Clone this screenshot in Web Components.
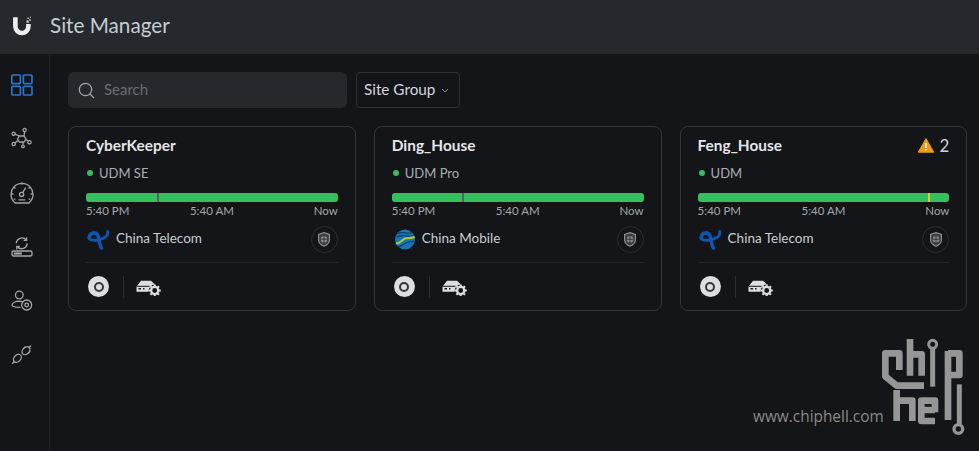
<!DOCTYPE html>
<html>
<head>
<meta charset="utf-8">
<style>
  html, body { margin: 0; height: 100%; background: #131518; overflow: hidden; }
  body { font-family: "Lato", "Liberation Sans", sans-serif; color: #dfe2e6; }
</style>
</head>
<body>
<site-manager>
  <site-card name="CyberKeeper" model="UDM SE" isp="China Telecom" logo="telecom" tick="#5c6065" tick-at="71"></site-card>
  <site-card name="Ding_House" model="UDM Pro" isp="China Mobile" logo="mobile" tick="#5c6065" tick-at="70"></site-card>
  <site-card name="Feng_House" model="UDM" isp="China Telecom" logo="telecom" alerts="2" tick="#e4c92f" tick-at="230"></site-card>
</site-manager>

<script>
// Top bar
class TopBar extends HTMLElement {
  constructor() {
    super();
    this.attachShadow({ mode: 'open' });
    this.shadowRoot.innerHTML = `
<style>
  :host { display: flex; align-items: center; height: 54px; background: #25282d; padding-left: 11px; box-sizing: border-box; flex: none; }
  svg { width: 22px; height: 22px; flex: none; margin-top: -3px; }
  span { margin-left: 17px; font-size: 20.7px; color: #c6ccd3; margin-top: -4px; }
</style>
<svg viewBox="0 0 22 22" fill="none">
  <path d="M4.4 2.2V11.5a6.5 6.5 0 0 0 13 0V9" stroke="#eceef0" stroke-width="4.6"/>
  <path d="M15.5 5.6h2.2v2.2h-2.2zM18.2 4.2h1.6v1.6h-1.6zM16.4 2.6h1.3v1.3h-1.3zM19 1.8h1v1h-1z" fill="#d8dade"/>
</svg>
<span>Site Manager</span>`;
  }
}
customElements.define('top-bar', TopBar);

// Left navigation
class SideNav extends HTMLElement {
  constructor() {
    super();
    this.attachShadow({ mode: 'open' });
    this.shadowRoot.innerHTML = `
<style>
  :host { display: flex; flex-direction: column; align-items: center; width: 50px; flex: none; box-sizing: border-box; border-right: 1px solid #1f2125; padding-top: 19px; gap: 30px; }
  svg { width: 24px; height: 24px; fill: none; stroke: #a3a6aa; stroke-width: 1.3; display: block; margin-left: -6px; }
</style>
<svg viewBox="0 0 24 24" style="stroke:#2f73c9;stroke-width:1.7">
  <rect x="1.8" y="2" width="8.6" height="8.6" rx="1"/><rect x="13.4" y="2" width="8.6" height="8.6" rx="1"/>
  <rect x="1.8" y="13.4" width="8.6" height="8.6" rx="1"/><rect x="13.4" y="13.4" width="8.6" height="8.6" rx="1"/>
</svg>
<svg viewBox="0 0 24 24">
  <path d="M9.5 9h4.5l2 3-2 3H9.5l-2-3z"/>
  <path d="M9.5 9 5 7.2M14 9l.6-4M16 12.5l2 1.6M13 15v2.6M7.8 13.5 5 16"/>
  <circle cx="3.7" cy="6.8" r="1.6"/><circle cx="14.6" cy="3" r="1.6"/><circle cx="19.4" cy="15.3" r="1.7"/><circle cx="13" cy="19.4" r="1.3"/><circle cx="3.7" cy="17" r="1.7"/>
</svg>
<svg viewBox="0 0 24 24">
  <path d="M5.2 22A11 11 0 1 1 18.8 22z"/>
  <path d="M12 1.5v2.2M3.8 6l1.6 1.4M20.2 6l-1.6 1.4M1.2 13h2.2M20.6 13h2.2M3.8 18.5l1.5-.8M20.2 18.5l-1.5-.8"/>
  <circle cx="11.6" cy="13.4" r="2.1"/><path d="M12.6 11.6 15.8 6.6M8.6 18.8h6.6"/>
</svg>
<svg viewBox="0 0 24 24">
  <rect x="2" y="16" width="20" height="5" rx="1.4"/><path d="M3.8 18.5h8" stroke-width="2.2"/>
  <path d="M6.3 8.200A5.600 5.600 0 0 1 16 4.800M17.200 8.400A5.600 5.600 0 0 1 7.400 11.800"/>
  <path d="M16.600 2.400V5.400H13.600M6.800 14.400V11.400H9.800"/>
</svg>
<svg viewBox="0 0 24 24">
  <circle cx="9.3" cy="6" r="3.8"/>
  <path d="M12.4 12.600a13 13 0 0 0-3.200-.5C5.800 12.100 2 13.800 2 16c0 1.800 2.600 2.400 8.400 2.400"/>
  <circle cx="16.700" cy="16" r="5"/><circle cx="16.700" cy="16" r="1.800"/>
</svg>
<svg viewBox="0 0 24 24">
  <path d="M2.200 20.800 4.600 18.200M21 2.800 18.800 5M15.400 3.600 13.400 5.600M20.200 8.400 18.200 10.400"/>
  <ellipse cx="7.400" cy="15.300" rx="3.300" ry="4.500" transform="rotate(45 7.400 15.300)"/>
  <ellipse cx="16" cy="7.700" rx="3.300" ry="4.500" transform="rotate(45 16 7.700)"/>
</svg>`;
  }
}
customElements.define('side-nav', SideNav);

// Search field
class SearchBox extends HTMLElement {
  constructor() {
    super();
    this.attachShadow({ mode: 'open' });
    this.shadowRoot.innerHTML = `
<style>
  :host { display: flex; align-items: center; width: 279px; height: 36px; background: #25282d; border-radius: 6px; padding-left: 10px; box-sizing: border-box; }
  svg { width: 17px; height: 17px; fill: none; stroke: #a2a5a9; stroke-width: 1.3; }
  span { margin-left: 9px; font-size: 15px; color: #6a6d72; margin-top: -2px; }
</style>
<svg viewBox="0 0 17 17"><circle cx="7.5" cy="7.5" r="6.2"/><path d="M12 12l4 4"/></svg>
<span>Search</span>`;
  }
}
customElements.define('search-box', SearchBox);

// Dropdown button
class GroupSelect extends HTMLElement {
  constructor() {
    super();
    this.attachShadow({ mode: 'open' });
    this.shadowRoot.innerHTML = `
<style>
  :host { display: flex; align-items: center; height: 36px; width: 104px; border: 1px solid #2d3035; border-radius: 4px; padding-left: 7px; box-sizing: border-box; font-size: 15.3px; color: #d3d7dc; }
  span { margin-top: -2px; }
  svg { width: 8px; height: 5px; margin-left: 6px; fill: none; stroke: #85888c; stroke-width: 1; }
</style>
<span>Site Group</span>
<svg viewBox="0 0 8 5"><path d="M1 1l3 3 3-3"/></svg>`;
  }
}
customElements.define('group-select', GroupSelect);

const ispLogos = {
  telecom: `<svg viewBox="0 0 24 22" fill="none" stroke-linecap="round">
    <path d="M3.200 10.500C3 5.200 8 3.800 10.800 5.800 14 8.200 12 15 15.400 20" stroke="#0d55ae" stroke-width="3.500"/>
    <path d="M21.800 3.600C22.500 8.500 17 11 11.500 12 7.500 12.700 4.500 13 3.200 10" stroke="#0d55ae" stroke-width="3"/>
  </svg>`,
  mobile: `<svg viewBox="0 0 24 22" fill="none">
    <circle cx="13" cy="11.500" r="10" fill="#1776b5"/>
    <path d="M6 5.500C10 3 14 6.500 20 4.500M4.500 9C9 6 14 9.500 21.500 7.500" stroke="#0b3f68" stroke-width="1.200"/>
    <path d="M3.800 15.500C9 15.800 10.500 10 15 10.200 18 10.300 20 10.200 22.600 9" stroke="#a6c93a" stroke-width="2.200"/>
    <path d="M5.500 18.500C11 19 13 14 17 14c2 0 3.500 0 5-1" stroke="#0b3f68" stroke-width="1.200"/>
  </svg>`
};

// Uptime bar with its three time labels
class UptimeBar extends HTMLElement {
  constructor() {
    super();
    this.attachShadow({ mode: 'open' });
    const at = this.getAttribute('tick-at');
    const color = this.getAttribute('tick');
    this.shadowRoot.innerHTML = `
<style>
  :host { display: block; margin-top: 11px; }
  .bar { position: relative; height: 9px; background: #37bf5f; border-radius: 3px; }
  .tick { position: absolute; top: 0; bottom: 0; width: 2px; left: ${at}px; background: ${color}; }
  .labels { display: grid; grid-template-columns: 1fr auto 1fr; font-size: 11.5px; color: #a3a8ae; margin-top: 1px; line-height: 15px; }
  .labels span:last-child { justify-self: end; }
</style>
<div class="bar"><div class="tick"></div></div>
<div class="labels"><span>5:40 PM</span><span>5:40 AM</span><span>Now</span></div>`;
  }
}
customElements.define('uptime-bar', UptimeBar);

// One site
class SiteCard extends HTMLElement {
  constructor() {
    super();
    this.attachShadow({ mode: 'open' });
    const a = n => this.getAttribute(n);
    const alert = a('alerts') ? `<div class="alert">
      <svg viewBox="0 0 16 15"><path d="M8 0.6 15.800 14.200H0.200z" fill="#ed9a15" stroke="#ed9a15" stroke-linejoin="round"/><path d="M8 5v5" stroke="#fff" stroke-width="1.500"/><path d="M8 11v1.600" stroke="#fff" stroke-width="1.500"/></svg>
      <span>${a('alerts')}</span></div>` : '';
    this.shadowRoot.innerHTML = `
<style>
  :host { display: block; flex: none; width: 287.8px; height: 185px; box-sizing: border-box; border: 1px solid #33363b; border-radius: 8px; padding: 8px 17px 0; }
  .head { display: flex; justify-content: space-between; align-items: center; height: 20px; }
  .name { font-size: 15.4px; font-weight: 700; color: #e3e6e9; }
  .alert { display: flex; align-items: center; gap: 6px; font-size: 17px; color: #cdd2d8; }
  .alert svg { width: 16px; height: 15px; }
  .model { display: flex; align-items: center; height: 18px; margin-top: 9px; font-size: 13px; color: #a9aeb4; }
  .dot { width: 6px; height: 6px; border-radius: 50%; background: #37bf5f; margin: 0 6px 0 1px; }
  .isp { display: flex; align-items: center; height: 28px; margin-top: 7px; font-size: 13.5px; color: #c9cdd2; }
  .isp > svg { width: 24px; height: 22px; margin-right: 6px; }
  .isp > span { margin-top: -2px; }
  .shield { margin-left: auto; width: 27px; height: 27px; border: 1px solid #2c2f33; border-radius: 50%; box-sizing: border-box; display: flex; align-items: center; justify-content: center; }
  .shield svg { width: 12px; height: 15px; }
  .foot { display: flex; align-items: center; border-top: 1px solid #222428; margin-top: 9px; height: 47px; }
  .ring { width: 21px; height: 21px; border-radius: 50%; background: #dcdee0; margin-left: 2px; display: flex; align-items: center; justify-content: center; }
  .ring i { width: 10px; height: 10px; box-sizing: border-box; border: 2px solid #35373b; border-radius: 50%; }
  .sep { width: 1px; height: 22px; background: #2a2c30; margin: 0 12px 0 14px; }
  .gw { width: 26px; height: 18px; }
</style>
<div class="head"><span class="name">${a('name')}</span>${alert}</div>
<div class="model"><span class="dot"></span>${a('model')}</div>
<uptime-bar tick="${a('tick')}" tick-at="${a('tick-at')}"></uptime-bar>
<div class="isp">${ispLogos[a('logo')]}<span>${a('isp')}</span>
  <div class="shield"><svg viewBox="0 0 12 15"><path d="M6 .6 11.400 2.400V8c0 3-2.600 5-5.400 6.200C3.200 13 .6 11 .6 8V2.400z" fill="#3a3c40" stroke="#8b8e92" stroke-width="1.200"/><circle cx="6" cy="7.200" r="3.200" fill="#8b8e92"/><path d="M6 4v6.400M2.800 7.200h6.400" stroke="#2a2c30" stroke-width=".9"/></svg></div>
</div>
<div class="foot">
  <div class="ring"><i></i></div>
  <div class="sep"></div>
  <svg class="gw" viewBox="0 0 26 18">
    <path d="M.5 8.500 5 2.800H15L19 6.500A6.500 6.500 0 0 0 12.600 13.700H.5z" fill="#dcdee0"/>
    <path d="M.5 8.300H13.500" stroke="#131518" stroke-width="1"/>
    <path d="M2.500 10.700H5M7 10.700H8.500" stroke="#131518" stroke-width="1.500"/>
    <circle cx="18.700" cy="12.500" r="3.600" fill="none" stroke="#dcdee0" stroke-width="2.300"/>
    <path d="M18.700 6.400v2M18.700 16.600v1.400M12.600 12.500h2M22.800 12.500h2M14.400 8.200l1.400 1.400M21.600 15.400 23 16.800M23 8.200l-1.400 1.400M15.800 15.400 14.400 16.800" stroke="#dcdee0" stroke-width="2.100"/>
  </svg>
</div>`;
  }
}
customElements.define('site-card', SiteCard);

// Forum watermark drawn over the page, path coordinates are 3x pixels
class ChipWatermark extends HTMLElement {
  constructor() {
    super();
    this.attachShadow({ mode: 'open' });
    this.shadowRoot.innerHTML = `
<style>
  :host { position: absolute; left: 753px; top: 335px; width: 226px; height: 116px; display: block; }
  span { position: absolute; left: 0; top: 71px; font: 15.4px "Open Sans", sans-serif; color: #8a8a8a; }
  svg { position: absolute; left: 127px; top: 0; width: 90px; height: 110px; fill: none; stroke: #969696; stroke-width: 20; stroke-linejoin: round; }
</style>
<span>www.chiphell.com</span>
<svg viewBox="0 0 270 330">
  <path d="M58 105V55H16V124L50 152H132"/>
  <path d="M90 12V122M90 58H125V122"/>
  <path d="M158 40V155" stroke-width="15"/><circle cx="158" cy="28" r="12" stroke-width="9"/>
  <path d="M204 48V255M204 55H238V120H204"/>
  <path d="M50 165V258M50 197H97V258"/>
  <path d="M165 232V197H124V258H165M124 225H165"/>
  <path d="M238 148V268" stroke-width="15"/><circle cx="235" cy="282" r="13" stroke-width="10"/>
</svg>`;
  }
}
customElements.define('chip-watermark', ChipWatermark);

// Page shell: top bar, nav, toolbar and the card row
class SiteManager extends HTMLElement {
  constructor() {
    super();
    this.attachShadow({ mode: 'open' });
    this.shadowRoot.innerHTML = `
<style>
  :host { display: flex; flex-direction: column; height: 451px; }
  .body { display: flex; flex: 1; }
  main { flex: 1; padding: 18px 0 0 18px; }
  .tools { display: flex; gap: 9px; }
  .cards { display: flex; gap: 18px; margin-top: 18px; }
</style>
<top-bar></top-bar>
<div class="body">
  <side-nav></side-nav>
  <main>
    <div class="tools"><search-box></search-box><group-select></group-select></div>
    <div class="cards"><slot></slot></div>
  </main>
</div>
<chip-watermark></chip-watermark>`;
  }
}
customElements.define('site-manager', SiteManager);
</script>
</body>
</html>
